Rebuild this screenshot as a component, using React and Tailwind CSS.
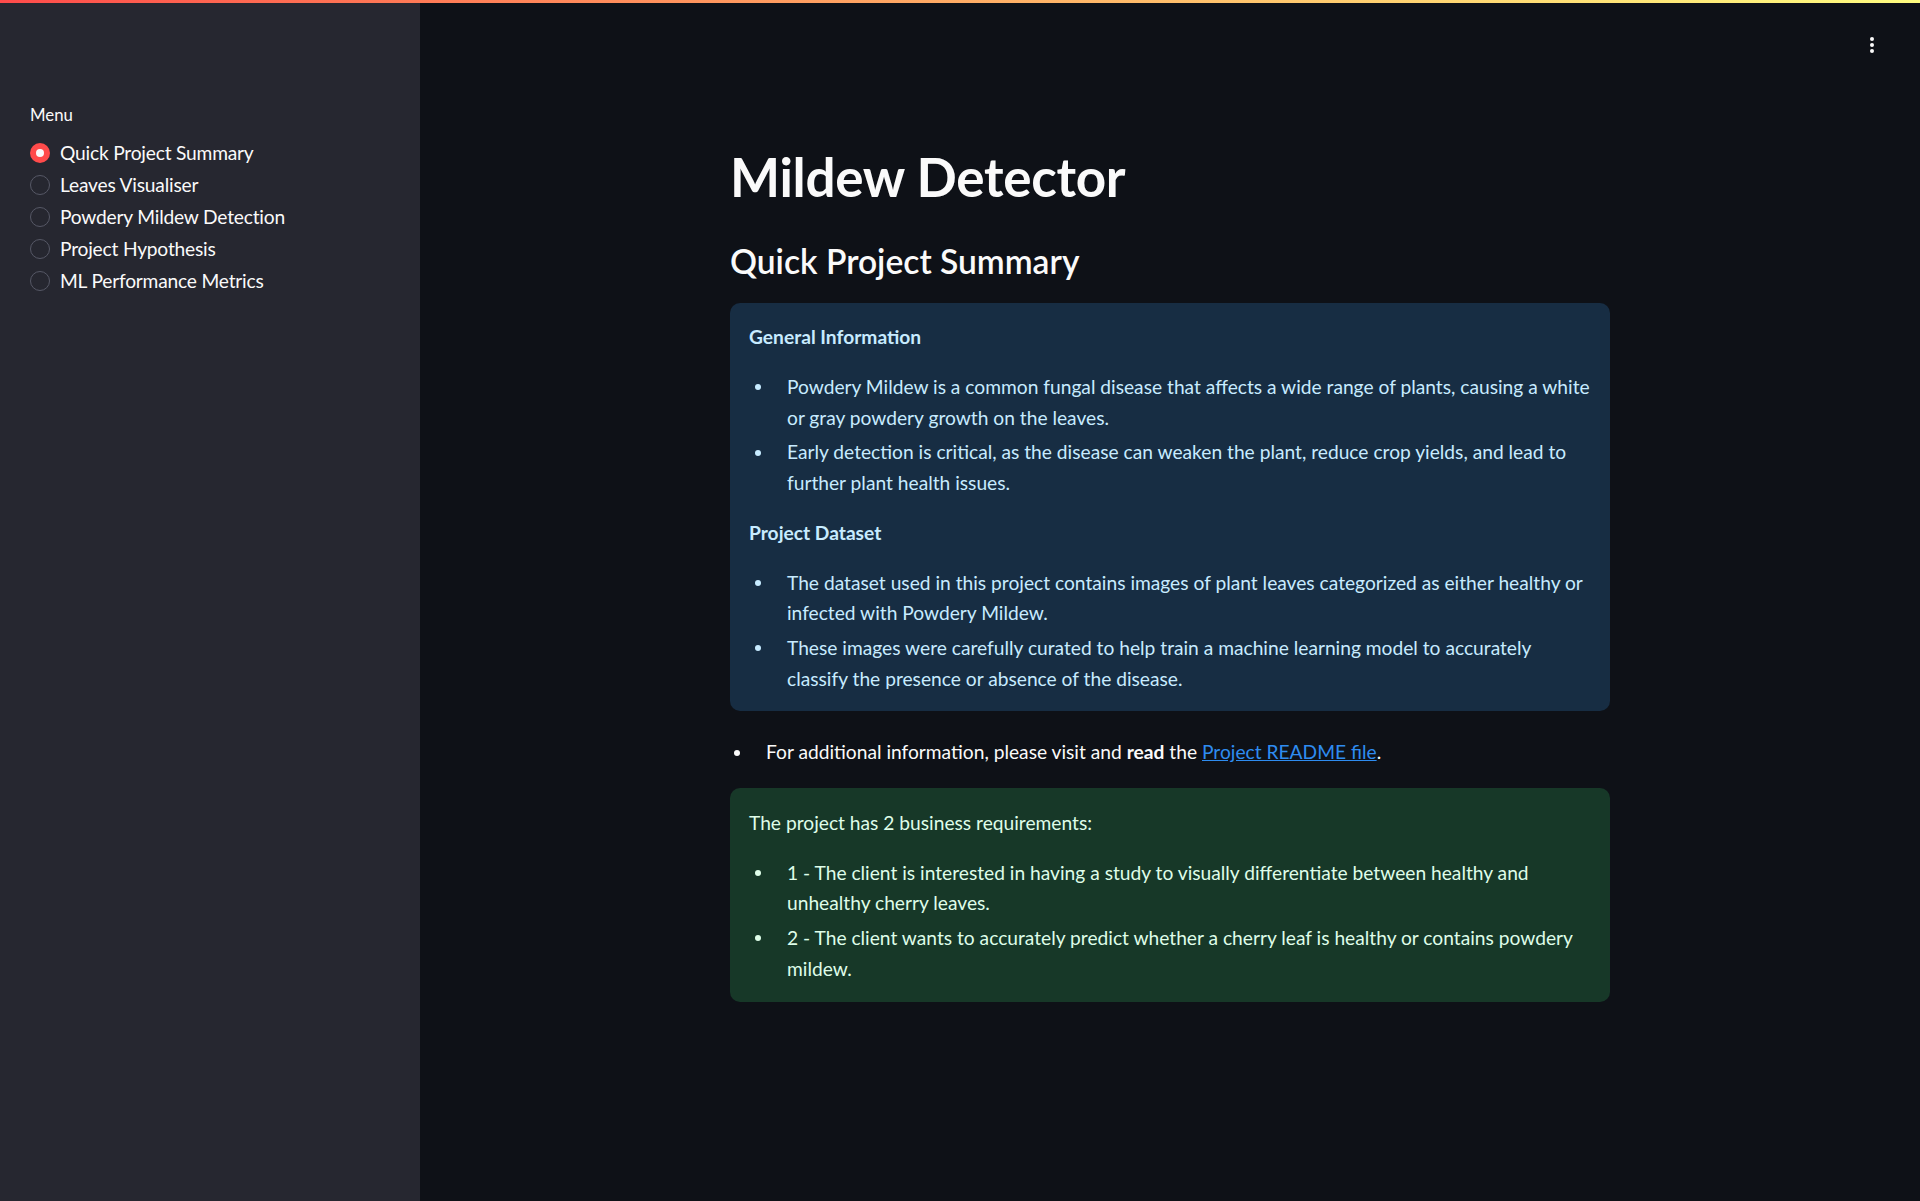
import React from "react";

const font = { fontFamily: "Lato, 'Noto Sans', sans-serif" };

function Radio({ label, selected }) {
  return (
    <div className="flex h-[32px] items-center">
      {selected ? (
        <span className="flex h-[20px] w-[20px] items-center justify-center rounded-full bg-[#ff4b4b]">
          <span className="h-[8px] w-[8px] rounded-full bg-[#fafafa]" />
        </span>
      ) : (
        <span className="h-[20px] w-[20px] rounded-full border border-[#565866]" />
      )}
      <span className="ml-[10px] text-[19.2px] leading-[24px] tracking-[-0.2px] text-[#fafafa]">{label}</span>
    </div>
  );
}

function Li({ children, first, inner = true }) {
  return (
    <li className={`flex ${first ? "" : "mt-[3.84px]"}`}>
      <span className={`${inner ? "w-[38px]" : "w-[36px]"} shrink-0`}>
        <span className={`mt-[12.5px] block h-[6px] w-[6px] rounded-full bg-current ${inner ? "ml-[5.6px]" : "ml-[4px]"}`} />
      </span>
      <span className="min-w-0 flex-1">{children}</span>
    </li>
  );
}

export default function App() {
  const items = [
    "Quick Project Summary",
    "Leaves Visualiser",
    "Powdery Mildew Detection",
    "Project Hypothesis",
    "ML Performance Metrics",
  ];
  return (
    <div className="relative flex min-h-[1201px] w-full bg-[#0e1117]" style={font}>
      <div className="absolute left-0 right-0 top-0 h-[3px] bg-gradient-to-r from-[#ff4b4b] to-[#fffd80]" />
      <div className="absolute right-[46px] top-[37px] flex flex-col gap-[2px]">
        <span className="h-[4px] w-[4px] rounded-full bg-[#fafafa]" />
        <span className="h-[4px] w-[4px] rounded-full bg-[#fafafa]" />
        <span className="h-[4px] w-[4px] rounded-full bg-[#fafafa]" />
      </div>

      <aside className="w-[420px] shrink-0 bg-[#262730] pl-[30px] pr-[29px] pt-[103px]">
        <div className="mb-[10px] text-[16.8px] leading-[24px] text-[#fafafa]">Menu</div>
        <div className="flex flex-col">
          {items.map((it, i) => (
            <Radio key={it} label={it} selected={i === 0} />
          ))}
        </div>
      </aside>

      <main className="flex-1">
        <div className="mx-auto w-[880px] pt-[145px] pb-[160px]">
          <h1 className="text-[53px] font-bold leading-[64px] tracking-[-0.3px] text-[#fafafa]">Mildew Detector</h1>
          <h3 className="mt-[32px] text-[33.6px] font-semibold leading-[40px] text-[#fafafa]">
            Quick Project Summary
          </h3>

          <div className="mt-[22px] rounded-[10px] bg-[#172d43] px-[19px] pt-[19px] pb-[17px] text-[19.2px] leading-[30.72px] text-[#c7ebff]">
            <p className="font-bold">General Information</p>
            <ul className="mt-[19.2px]">
              <Li first>
                Powdery Mildew is a common fungal disease that affects a wide range of plants, causing a white
                or gray powdery growth on the leaves.
              </Li>
              <Li>
                Early detection is critical, as the disease can weaken the plant, reduce crop yields, and lead to
                further plant health issues.
              </Li>
            </ul>
            <p className="mt-[19.2px] font-bold">Project Dataset</p>
            <ul className="mt-[19.2px]">
              <Li first>
                The dataset used in this project contains images of plant leaves categorized as either healthy or
                infected with Powdery Mildew.
              </Li>
              <Li>
                These images were carefully curated to help train a machine learning model to accurately classify
                the presence or absence of the disease.
              </Li>
            </ul>
          </div>

          <ul className="mt-[25.6px] text-[19.2px] leading-[30.72px] text-[#fafafa]">
            <Li first inner={false}>
              For additional information, please visit and <strong className="font-bold">read</strong> the{" "}
              <a href="#" className="text-[#2e8cf0] underline">
                Project README file
              </a>
              .
            </Li>
          </ul>

          <div className="mt-[20.5px] rounded-[10px] bg-[#173828] px-[19px] pt-[19.5px] pb-[18px] text-[19.2px] leading-[30.72px] text-[#dffde9]">
            <p>The project has 2 business requirements:</p>
            <ul className="mt-[19.2px]">
              <Li first>
                1 - The client is interested in having a study to visually differentiate between healthy and
                unhealthy cherry leaves.
              </Li>
              <Li>
                2 - The client wants to accurately predict whether a cherry leaf is healthy or contains powdery
                mildew.
              </Li>
            </ul>
          </div>
        </div>
      </main>
    </div>
  );
}
